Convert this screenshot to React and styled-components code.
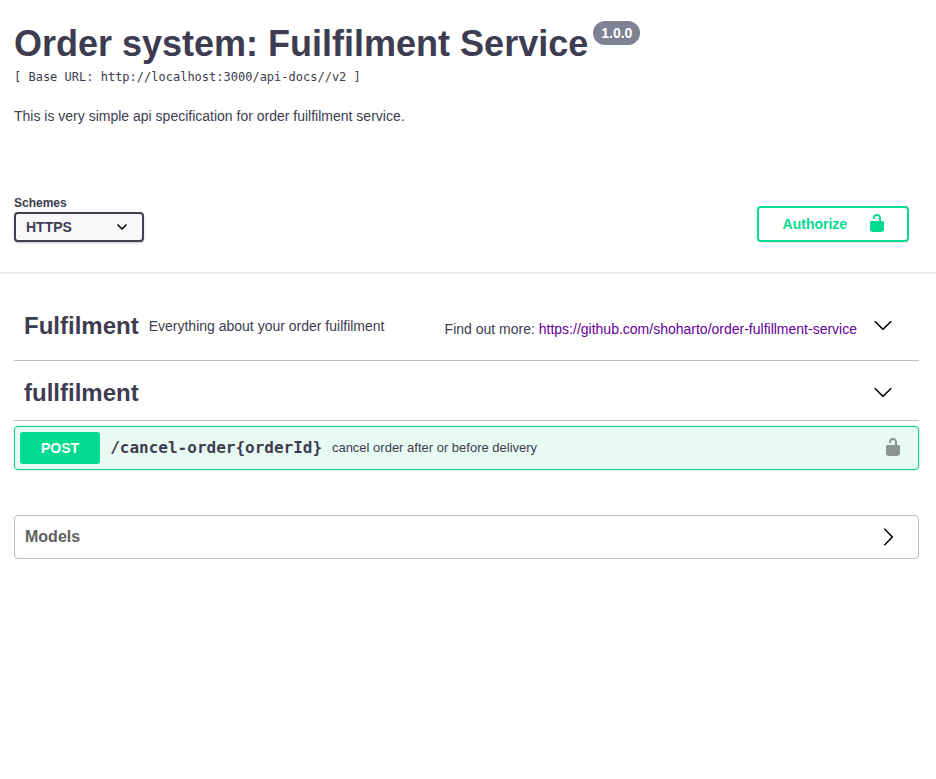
import React from "react";
import styled, { createGlobalStyle } from "styled-components";

const Global = createGlobalStyle`
  *, *::before, *::after { box-sizing: border-box; }
  body { margin: 0; background: #fff; color: #3d3c50; font-family: "Liberation Sans", Arial, sans-serif; }
`;

const Page = styled.main`
  display: flex;
  flex-direction: column;
  height: 779px;
  overflow: hidden;
`;

const Info = styled.header`
  height: 196px;
  padding: 23px 14px 0;
`;

const Title = styled.h1`
  display: flex;
  align-items: flex-start;
  gap: 5px;
  height: 46px;
  margin: 0;
  font-size: 36px;
  line-height: 41px;
  font-weight: 700;
  white-space: nowrap;
`;

const Version = styled.span`
  height: 24px;
  margin-top: -2px;
  padding: 0 8px;
  border-radius: 57px;
  background: #7f8194;
  color: #fff;
  font-size: 14px;
  line-height: 24px;
`;

const BaseUrl = styled.pre`
  margin: 0;
  font: 12px/16px "DejaVu Sans Mono", monospace;
`;

const Description = styled.p`
  margin: 23px 0 0;
  font-size: 14px;
  line-height: 16px;
`;

const SchemeBar = styled.section`
  display: flex;
  justify-content: space-between;
  align-items: flex-start;
  height: 76px;
  padding: 0 27px 0 14px;
  box-shadow: 0 1px 2px rgba(0, 0, 0, 0.15);
`;

const SchemeLabel = styled.div`
  font-size: 12px;
  line-height: 14px;
  font-weight: 700;
`;

const SchemeSelect = styled.button`
  display: flex;
  align-items: center;
  justify-content: space-between;
  width: 130px;
  height: 30px;
  margin-top: 2px;
  padding: 0 15px 0 10px;
  border: 2px solid #41404f;
  border-radius: 4px;
  background: #f7f7f7;
  box-shadow: 0 1px 2px rgba(0, 0, 0, 0.25);
  color: #3d3c50;
  font: 700 14px "Liberation Sans", Arial, sans-serif;
`;

const Authorize = styled.button`
  display: flex;
  align-items: center;
  justify-content: space-between;
  width: 152px;
  height: 36px;
  margin-top: 10px;
  padding: 0 20px 0 23.6px;
  border: 2px solid #00db90;
  border-radius: 4px;
  background: transparent;
  box-shadow: 0 1px 2px rgba(0, 0, 0, 0.1);
  color: #00db90;
  font: 700 14px "Liberation Sans", Arial, sans-serif;

  svg { margin-bottom: 2px; }
`;

const Content = styled.div`
  padding: 18px 17px 0 14px;
`;

const Tag = styled.section`
  display: flex;
  align-items: center;
  height: ${(p) => p.$height}px;
  padding: ${(p) => p.$shift}px 26px 0 10px;
  border-bottom: 1px solid #bfbfc3;

  svg { margin-bottom: 2px; }
`;

const TagName = styled.h2`
  flex: 1 0 auto;
  max-width: 115px;
  margin: 0;
  font-size: 24px;
  line-height: 28px;
  white-space: nowrap;
`;

const TagNote = styled.span`
  flex: 1;
  padding-left: 9.7px;
  font-size: 14px;
  line-height: 16px;
`;

const More = styled.span`
  margin: 6px 16px 0 0;
  font-size: 14px;
  line-height: 16px;
`;

const Link = styled.a`
  color: #660099;
  text-decoration: none;
`;

const Operation = styled.section`
  display: flex;
  align-items: center;
  height: 44px;
  margin-top: 5px;
  padding: 0 15px 0 5px;
  border: 1px solid #00db90;
  border-radius: 4px;
  background: #e8fbf3;
  box-shadow: 0 0 3px rgba(0, 0, 0, 0.19);

  svg { margin-bottom: 2px; }
`;

const Method = styled.span`
  width: 80px;
  height: 32px;
  border-radius: 3px;
  background: #00db90;
  color: #fff;
  font-size: 14px;
  font-weight: 700;
  line-height: 32px;
  text-align: center;
`;

const Path = styled.code`
  padding: 0 9.8px 0 10.2px;
  font: 700 16px/20px "DejaVu Sans Mono", monospace;
`;

const Summary = styled.span`
  flex: 1;
  margin-bottom: 2px;
  font-size: 13px;
`;

const Models = styled.section`
  display: flex;
  align-items: center;
  justify-content: space-between;
  height: 44px;
  margin-top: 45px;
  padding: 0 20px 0 10px;
  border: 1px solid #bfbfc6;
  border-radius: 4px;
`;

const ModelsTitle = styled.h3`
  margin: 0;
  color: #606060;
  font-size: 16px;
`;

const Lock = ({ color }) => (
  <svg width="20" height="20" viewBox="0 0 20 20" fill={color}>
    <path d="M15.8 8H14V5.6C14 2.703 12.665 1 10 1 7.334 1 6 2.703 6 5.6V6h2v-.801C8 3.754 8.797 3 10 3c1.203 0 2 .754 2 2.199V8H4c-.553 0-1 .646-1 1.199V17c0 .549.428 1.139.951 1.307l1.197.387C5.672 18.861 6.55 19 7.1 19h5.8c.549 0 1.428-.139 1.951-.307l1.196-.387c.524-.167.953-.757.953-1.306V9.199C17 8.646 16.352 8 15.8 8z" />
  </svg>
);

const Chevron = ({ right = false }) => (
  <svg width="20" height="20" viewBox="0 0 20 20" fill="#000">
    <path
      d={
        right
          ? "M13.25 10L6.109 2.58c-.268-.27-.268-.707 0-.979.268-.27.701-.27.969 0l7.83 7.908c.268.271.268.709 0 .979l-7.83 7.908c-.268.271-.701.27-.969 0-.268-.269-.268-.707 0-.979L13.25 10z"
          : "M17.418 6.109c.272-.268.709-.268.979 0s.271.701 0 .969l-7.908 7.83c-.27.268-.707.268-.979 0l-7.908-7.83c-.27-.268-.27-.701 0-.969.271-.268.709-.268.979 0L10 13.25l7.418-7.141z"
      }
    />
  </svg>
);

export default function App() {
  return (
    <Page>
      <Global />
      <Info>
        <Title>Order system: Fuilfilment Service<Version>1.0.0</Version></Title>
        <BaseUrl>[ Base URL: http://localhost:3000/api-docs//v2 ]</BaseUrl>
        <Description>This is very simple api specification for order fuilfilment service.</Description>
      </Info>
      <SchemeBar>
        <div>
          <SchemeLabel>Schemes</SchemeLabel>
          <SchemeSelect>
            HTTPS
            <svg width="10" height="6" viewBox="0 0 10 6" fill="none" stroke="#000" strokeWidth="1.5"><path d="M.5.5L5 5 9.5.5" /></svg>
          </SchemeSelect>
        </div>
        <Authorize>Authorize<Lock color="#00db90" /></Authorize>
      </SchemeBar>
      <Content>
        <Tag $height={71} $shift={1}>
          <TagName>Fulfilment</TagName>
          <TagNote>Everything about your order fuilfilment</TagNote>
          <More>Find out more: <Link>https://github.com/shoharto/order-fulfillment-service</Link></More>
          <Chevron />
        </Tag>
        <Tag $height={60} $shift={4}>
          <TagName>fullfilment</TagName>
          <TagNote />
          <Chevron />
        </Tag>
        <Operation>
          <Method>POST</Method>
          <Path>/cancel-order&#123;orderId&#125;</Path>
          <Summary>cancel order after or before delivery</Summary>
          <Lock color="#8b958f" />
        </Operation>
        <Models><ModelsTitle>Models</ModelsTitle><Chevron right /></Models>
      </Content>
    </Page>
  );
}
